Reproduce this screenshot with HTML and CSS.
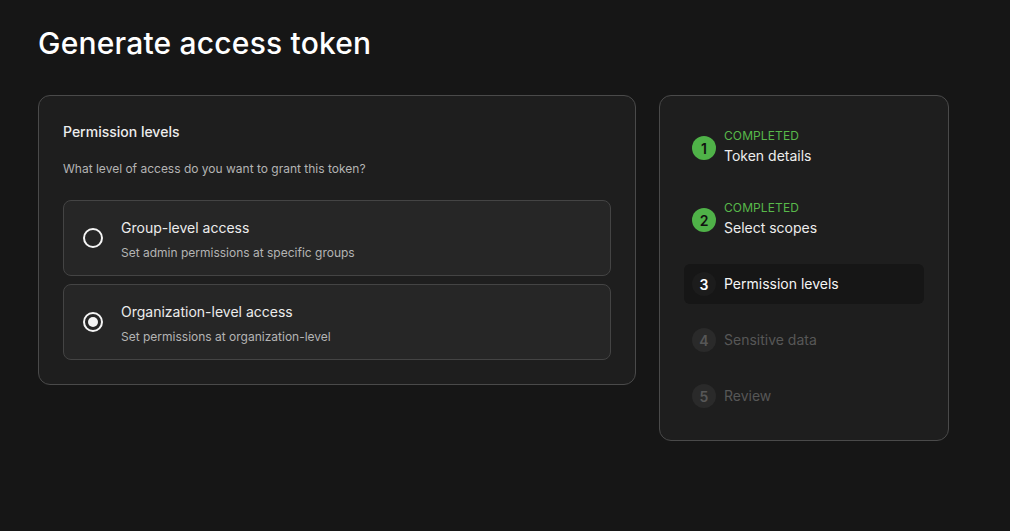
FILE: index.html
```html
<!DOCTYPE html>
<html lang="en">
<head>
<meta charset="utf-8">
<title>Generate access token</title>
<link rel="stylesheet" href="styles.css">
</head>
<body>
<main class="page">
  <h1 class="page-title">Generate access token</h1>
  <div class="layout">
    <section class="card main-card">
      <h2 class="card-title">Permission levels</h2>
      <p class="card-sub">What level of access do you want to grant this token?</p>
      <div class="options">
        <label class="option">
          <span class="radio"></span>
          <span class="option-text">
            <span class="option-title">Group-level access</span>
            <span class="option-desc">Set admin permissions at specific groups</span>
          </span>
        </label>
        <label class="option">
          <span class="radio checked"></span>
          <span class="option-text">
            <span class="option-title">Organization-level access</span>
            <span class="option-desc">Set permissions at organization-level</span>
          </span>
        </label>
      </div>
    </section>
    <aside class="card steps-card">
      <ol class="steps">
        <li class="step done">
          <span class="step-num">1</span>
          <span class="step-text"><span class="step-status">COMPLETED</span><span class="step-label">Token details</span></span>
        </li>
        <li class="step done">
          <span class="step-num">2</span>
          <span class="step-text"><span class="step-status">COMPLETED</span><span class="step-label">Select scopes</span></span>
        </li>
        <li class="step current">
          <span class="step-num">3</span>
          <span class="step-text"><span class="step-label">Permission levels</span></span>
        </li>
        <li class="step todo">
          <span class="step-num">4</span>
          <span class="step-text"><span class="step-label">Sensitive data</span></span>
        </li>
        <li class="step todo">
          <span class="step-num">5</span>
          <span class="step-text"><span class="step-label">Review</span></span>
        </li>
      </ol>
    </aside>
  </div>
</main>
</body>
</html>
```
FILE: styles.css
```css
* { box-sizing: border-box; }
html, body {
  margin: 0;
  padding: 0;
  background: #161616;
  color: #f2f2f2;
  font-family: Inter, "Noto Sans", sans-serif;
}
.page {
  padding: 25px 38px 0 38px;
}
.page-title {
  margin: 0 0 34px 0;
  font-size: 30px;
  line-height: 36px;
  font-weight: 500;
  color: #ffffff;
  letter-spacing: 0.2px;
}
.layout {
  display: flex;
  align-items: flex-start;
  gap: 23px;
}
.card {
  background: #1e1e1e;
  border: 1px solid #4a4a4a;
  border-radius: 12px;
}
.main-card {
  width: 598px;
  padding: 26px 24px 24px 24px;
}
.card-title {
  margin: 0;
  font-size: 14px;
  line-height: 20px;
  font-weight: 500;
  color: #ededed;
}
.card-sub {
  margin: 19px 0 23px 0;
  font-size: 12px;
  line-height: 16px;
  color: #b4b4b4;
}
.options {
  display: flex;
  flex-direction: column;
  gap: 8px;
}
.option {
  display: flex;
  align-items: center;
  gap: 19px;
  height: 76px;
  padding: 0 19px;
  background: #262626;
  border: 1px solid #444444;
  border-radius: 8px;
}
.radio {
  flex: none;
  width: 20px;
  height: 20px;
  border: 2px solid #f5f5f5;
  border-radius: 50%;
  display: flex;
  align-items: center;
  justify-content: center;
}
.radio.checked::after {
  content: "";
  width: 10px;
  height: 10px;
  border-radius: 50%;
  background: #f5f5f5;
}
.option-text {
  display: flex;
  flex-direction: column;
  gap: 7px;
  margin-left: -1px;
  margin-top: 2px;
}
.option-title {
  font-size: 14px;
  line-height: 20px;
  color: #ececec;
}
.option-desc {
  font-size: 12px;
  line-height: 16px;
  color: #b4b4b4;
}
.steps-card {
  width: 290px;
  padding: 24px;
}
.steps {
  list-style: none;
  margin: 0;
  padding: 0;
  display: flex;
  flex-direction: column;
  gap: 16px;
}
.step {
  display: flex;
  align-items: center;
  gap: 8px;
  padding: 8px;
  border-radius: 6px;
}
.step.done { min-height: 56px; }
.step-num {
  flex: none;
  width: 24px;
  height: 24px;
  border-radius: 50%;
  display: flex;
  align-items: center;
  justify-content: center;
  font-size: 14px;
  font-weight: 600;
}
.step-text {
  display: flex;
  flex-direction: column;
}
.done .step-text {
  padding-bottom: 2px;
}
.step-status {
  font-size: 12px;
  line-height: 16px;
  color: #58b84a;
  letter-spacing: 0.1px;
  margin-bottom: 2px;
}
.step-label {
  font-size: 14px;
  line-height: 20px;
  color: #ededed;
}
.done .step-num {
  background: #4fb248;
  color: #111111;
}
.current {
  background: #161616;
}
.current .step-num {
  background: #1c1c1c;
  color: #ffffff;
}
.current .step-label { color: #f5f5f5; }
.todo .step-num {
  background: #2a2a2a;
  color: #575757;
}
.todo .step-label { color: #575757; }
```
